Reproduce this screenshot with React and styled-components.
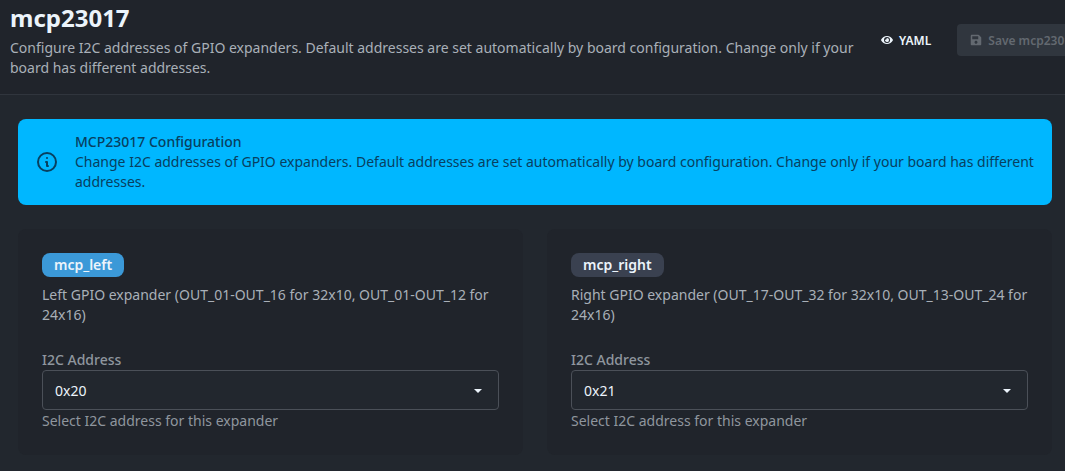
import React, { useState } from "react";
import styled, { createGlobalStyle } from "styled-components";
import { FaEye, FaSave } from "react-icons/fa";

const ADDRESSES = ["0x20", "0x21", "0x22", "0x23", "0x24", "0x25", "0x26", "0x27"];

const expanders = [
  {
    id: "mcp_left",
    color: "#3b99d8",
    desc: "Left GPIO expander (OUT_01-OUT_16 for 32x10, OUT_01-OUT_12 for 24x16)",
    address: "0x20",
  },
  {
    id: "mcp_right",
    color: "#3a4150",
    desc: "Right GPIO expander (OUT_17-OUT_32 for 32x10, OUT_13-OUT_24 for 24x16)",
    address: "0x21",
  },
];

const ExpanderCard = ({ id, color, desc, address }) => {
  const [value, setValue] = useState(address);

  return (
    <Card>
      <Badge $color={color}>{id}</Badge>
      <Desc>{desc}</Desc>
      <Label htmlFor={id}>I2C Address</Label>
      <SelectBox>
        <Select id={id} value={value} onChange={(e) => setValue(e.target.value)}>
          {ADDRESSES.map((a) => (
            <option key={a} value={a}>
              {a}
            </option>
          ))}
        </Select>
        <Caret viewBox="0 0 8 4" aria-hidden="true">
          <path d="M0 0h8L4 4z" fill="currentColor" />
        </Caret>
      </SelectBox>
      <Hint>Select I2C address for this expander</Hint>
    </Card>
  );
};

const App = () => {
  return (
    <>
      <GlobalStyle />
      <Header>
        <Heading>
          <Title>mcp23017</Title>
          <Subtitle>
            Configure I2C addresses of GPIO expanders. Default addresses are set
            automatically by board configuration. Change only if your board has
            different addresses.
          </Subtitle>
        </Heading>
        <Actions>
          <Button>
            <FaEye />
            YAML
          </Button>
          <SaveButton disabled>
            <FaSave />
            Save mcp23017
          </SaveButton>
        </Actions>
      </Header>
      <Main>
        <Alert>
          <InfoIcon viewBox="0 0 24 24" aria-hidden="true">
            <path d="M13 16h-1v-4h-1m1-4h.01M21 12a9 9 0 11-18 0 9 9 0 0118 0z" />
          </InfoIcon>
          <div>
            <AlertTitle>MCP23017 Configuration</AlertTitle>
            <AlertText>
              Change I2C addresses of GPIO expanders. Default addresses are set
              automatically by board configuration. Change only if your board
              has different addresses.
            </AlertText>
          </div>
        </Alert>
        <Grid>
          {expanders.map((e) => (
            <ExpanderCard key={e.id} {...e} />
          ))}
        </Grid>
      </Main>
    </>
  );
};

const GlobalStyle = createGlobalStyle`
  * {
    box-sizing: border-box;
  }
  body {
    margin: 0;
    min-height: 100vh;
    background-color: #22272e;
    color: #ecf4fb;
    font-family: "Noto Sans", sans-serif;
    font-size: 14px;
    line-height: 20px;
    overflow-x: hidden;
  }
  h1, h2, p {
    margin: 0;
  }
`;

const Header = styled.header`
  display: flex;
  align-items: center;
  gap: 13px;
  padding: 2px 0 16px 10px;
  background-color: #20242b;
  border-bottom: 1px solid #30353d;
`;

const Heading = styled.div`
  flex: 1;
  min-width: 0;
`;

const Title = styled.h1`
  font-size: 24px;
  font-weight: 700;
  line-height: 32px;
  margin-bottom: 4px;
`;

const Subtitle = styled.p`
  color: #a9b0b8;
`;

/* the save button runs past the right edge of the window */
const Actions = styled.div`
  display: flex;
  gap: 13px;
  margin-right: -26px;
`;

const Button = styled.button`
  display: inline-flex;
  align-items: center;
  gap: 6px;
  height: 32px;
  padding: 0 13px;
  border: 0;
  border-radius: 4px;
  background: none;
  color: inherit;
  font-family: inherit;
  font-size: 12px;
  font-weight: 600;
  white-space: nowrap;
`;

const SaveButton = styled(Button)`
  background-color: #30363e;
  color: #636970;
`;

const Main = styled.main`
  padding: 24px 13px 14px 18px;
`;

const Alert = styled.div`
  display: flex;
  align-items: center;
  gap: 16px;
  padding: 13px 17px;
  border-radius: 8px;
  background-color: #00b7ff;
  color: #08405f;
`;

const InfoIcon = styled.svg`
  flex: none;
  width: 24px;
  height: 24px;
  fill: none;
  stroke: currentColor;
  stroke-width: 2;
  stroke-linecap: round;
  stroke-linejoin: round;
`;

const AlertTitle = styled.h2`
  font-size: 14px;
  font-weight: 500;
`;

const AlertText = styled.p`
  font-size: 14px;
`;

const Grid = styled.div`
  display: grid;
  grid-template-columns: 1fr 1fr;
  gap: 24px;
  margin-top: 24px;
`;

const Card = styled.section`
  display: flex;
  flex-direction: column;
  padding: 24px;
  border-radius: 8px;
  background-color: #20242b;
`;

const Badge = styled.span`
  align-self: flex-start;
  height: 24px;
  padding: 2px 12px;
  border-radius: 8px;
  background-color: ${(props) => props.$color};
  font-weight: 600;
`;

const Desc = styled.p`
  margin: 8px 0 25px;
  color: #a9b0b8;
`;

const Label = styled.label`
  color: #8f969e;
  font-weight: 500;
`;

const SelectBox = styled.div`
  position: relative;
`;

const Select = styled.select`
  display: block;
  appearance: none;
  width: 100%;
  height: 40px;
  padding: 2px 12px 0;
  border: 1px solid #4b5058;
  border-radius: 4px;
  background-color: #22272e;
  color: inherit;
  font: inherit;
`;

const Caret = styled.svg`
  position: absolute;
  top: 19px;
  right: 17px;
  width: 8px;
  height: 4px;
  pointer-events: none;
`;

const Hint = styled.p`
  padding-top: 1px;
  color: #8f969e;
`;

export default App;
